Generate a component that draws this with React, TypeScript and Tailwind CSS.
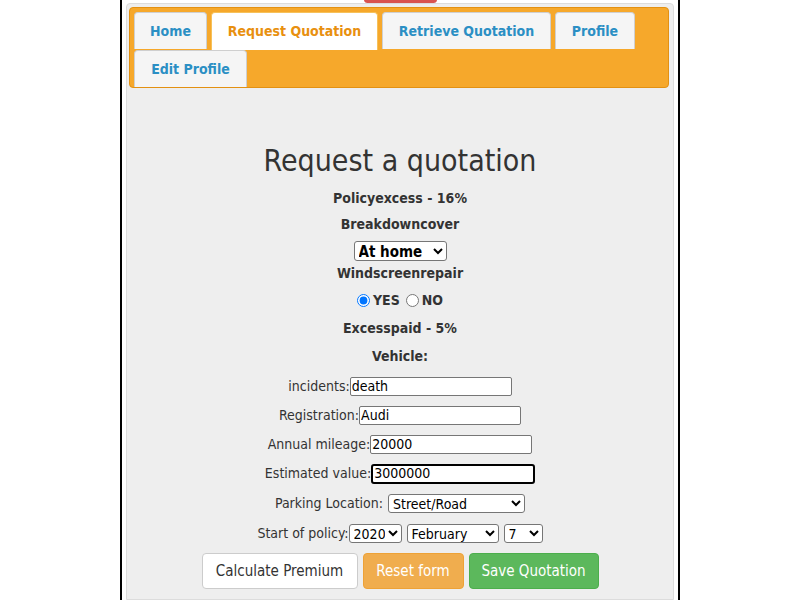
import React from "react";

const tabBase =
  "h-[37px] flex items-center justify-center whitespace-nowrap border border-[#cfcfcf] border-b-0 rounded-t-[4px] bg-[#f5f5f5] text-[#2b8fc4] font-bold text-[14px]";

function Row({ label, h, children }: { label: string; h: string; children: React.ReactNode }) {
  return (
    <div className={"flex items-center justify-center text-[14px] text-[#333] whitespace-nowrap " + h}>
      <span>{label}</span>
      {children}
    </div>
  );
}

const inputCls =
  "w-[162px] h-[19px] border border-[#767676] rounded-[2px] bg-white px-[1px] text-[14px] text-black outline-none";
const selectCls =
  "h-[19px] border border-[#767676] rounded-[3px] bg-white text-[14px] text-black";

export default function App() {
  return (
    <div className="min-h-[600px] bg-white font-['DejaVu_Sans_Condensed','DejaVu_Sans',sans-serif]">
      <div className="relative mx-auto w-[560px] h-[600px] border-x-2 border-black px-[4px] pt-[3px]">
        <div className="absolute left-[242px] top-[-4px] w-[73px] h-[7px] rounded-[4px] bg-[#d9534f]" />
        <div className="h-full border border-[#dcdcdc] rounded-t-[4px] bg-[#eeeeee] px-[2px] pt-[3px]">
          <div className="border border-[#e39112] rounded-[4px] bg-[#f6a82b] px-[4px] pt-[4px] pb-0 flex flex-wrap gap-x-[4px] w-[540px]">
            <div className={tabBase + " w-[73px]"}>Home</div>
            <div className="h-[38px] w-[167px] flex items-center justify-center whitespace-nowrap border border-[#f6c15a] border-b-0 rounded-t-[4px] bg-white text-[#e8900f] font-bold text-[14px]">
              Request Quotation
            </div>
            <div className={tabBase + " w-[169px]"}>Retrieve Quotation</div>
            <div className={tabBase + " w-[80px]"}>Profile</div>
            <div className={tabBase + " w-[113px] h-[36px]"}>Edit Profile</div>
          </div>

          <div className="flex flex-col items-center text-[#333] pt-[54px]">
            <h1 className="text-[30px] leading-[38px] h-[38px] whitespace-nowrap">Request a quotation</h1>
            <div className="font-bold text-[14px] h-[27px] leading-[27px] mt-[5px]">Policyexcess - 16%</div>
            <div className="font-bold text-[14px] h-[25px] leading-[25px]">Breakdowncover</div>
            <select className={selectCls + " w-[93px] font-bold text-[15px] h-[20px] mt-[4px]"} defaultValue="home">
              <option value="home">At home</option>
              <option value="road">Roadside</option>
            </select>
            <div className="font-bold text-[14px] h-[25px] leading-[25px]">Windscreenrepair</div>
            <div className="flex items-center h-[28px] font-bold text-[14px] gap-[3px]">
              <input type="radio" name="ws" defaultChecked className="w-[13px] h-[13px] m-0" />
              <span className="mr-[3px]">YES</span>
              <input type="radio" name="ws" className="w-[13px] h-[13px] m-0" />
              <span>NO</span>
            </div>
            <div className="font-bold text-[14px] h-[29px] leading-[29px]">Excesspaid - 5%</div>
            <div className="font-bold text-[14px] h-[27px] leading-[27px]">Vehicle:</div>
            <div className="h-[2px]" />
            <Row label="incidents:" h="h-[29px]">
              <input className={inputCls} defaultValue="death" />
            </Row>
            <Row label="Registration:" h="h-[29px]">
              <input className={inputCls} defaultValue="Audi" />
            </Row>
            <Row label="Annual mileage:" h="h-[29px]">
              <input className={inputCls} defaultValue="20000" />
            </Row>
            <Row label="Estimated value:" h="h-[29px]">
              <input
                className="w-[164px] h-[20px] border-2 border-black rounded-[3px] bg-white px-[1px] text-[14px] text-black outline-none"
                defaultValue="3000000"
              />
            </Row>
            <Row label="Parking Location:" h="h-[30px]">
              <select className={selectCls + " w-[137px] ml-[5px]"} defaultValue="street">
                <option value="street">Street/Road</option>
                <option value="garage">Garage</option>
              </select>
            </Row>
            <Row label="Start of policy:" h="h-[30px]">
              <select className={selectCls + " w-[53px]"} defaultValue="2020">
                <option>2020</option>
              </select>
              <select className={selectCls + " w-[92px] ml-[5px]"} defaultValue="February">
                <option>February</option>
              </select>
              <select className={selectCls + " w-[39px] ml-[5px]"} defaultValue="7">
                <option>7</option>
              </select>
            </Row>
            <div className="flex gap-[5px] mt-[5px]">
              <button className="h-[36px] w-[156px] rounded-[4px] border border-[#ccc] bg-white text-[#333] text-[15px]">
                Calculate Premium
              </button>
              <button className="h-[36px] w-[101px] rounded-[4px] border border-[#eea236] bg-[#f0ad4e] text-white text-[15px]">
                Reset form
              </button>
              <button className="h-[36px] w-[130px] rounded-[4px] border border-[#4cae4c] bg-[#5cb85c] text-white text-[15px]">
                Save Quotation
              </button>
            </div>
          </div>
        </div>
      </div>
    </div>
  );
}
